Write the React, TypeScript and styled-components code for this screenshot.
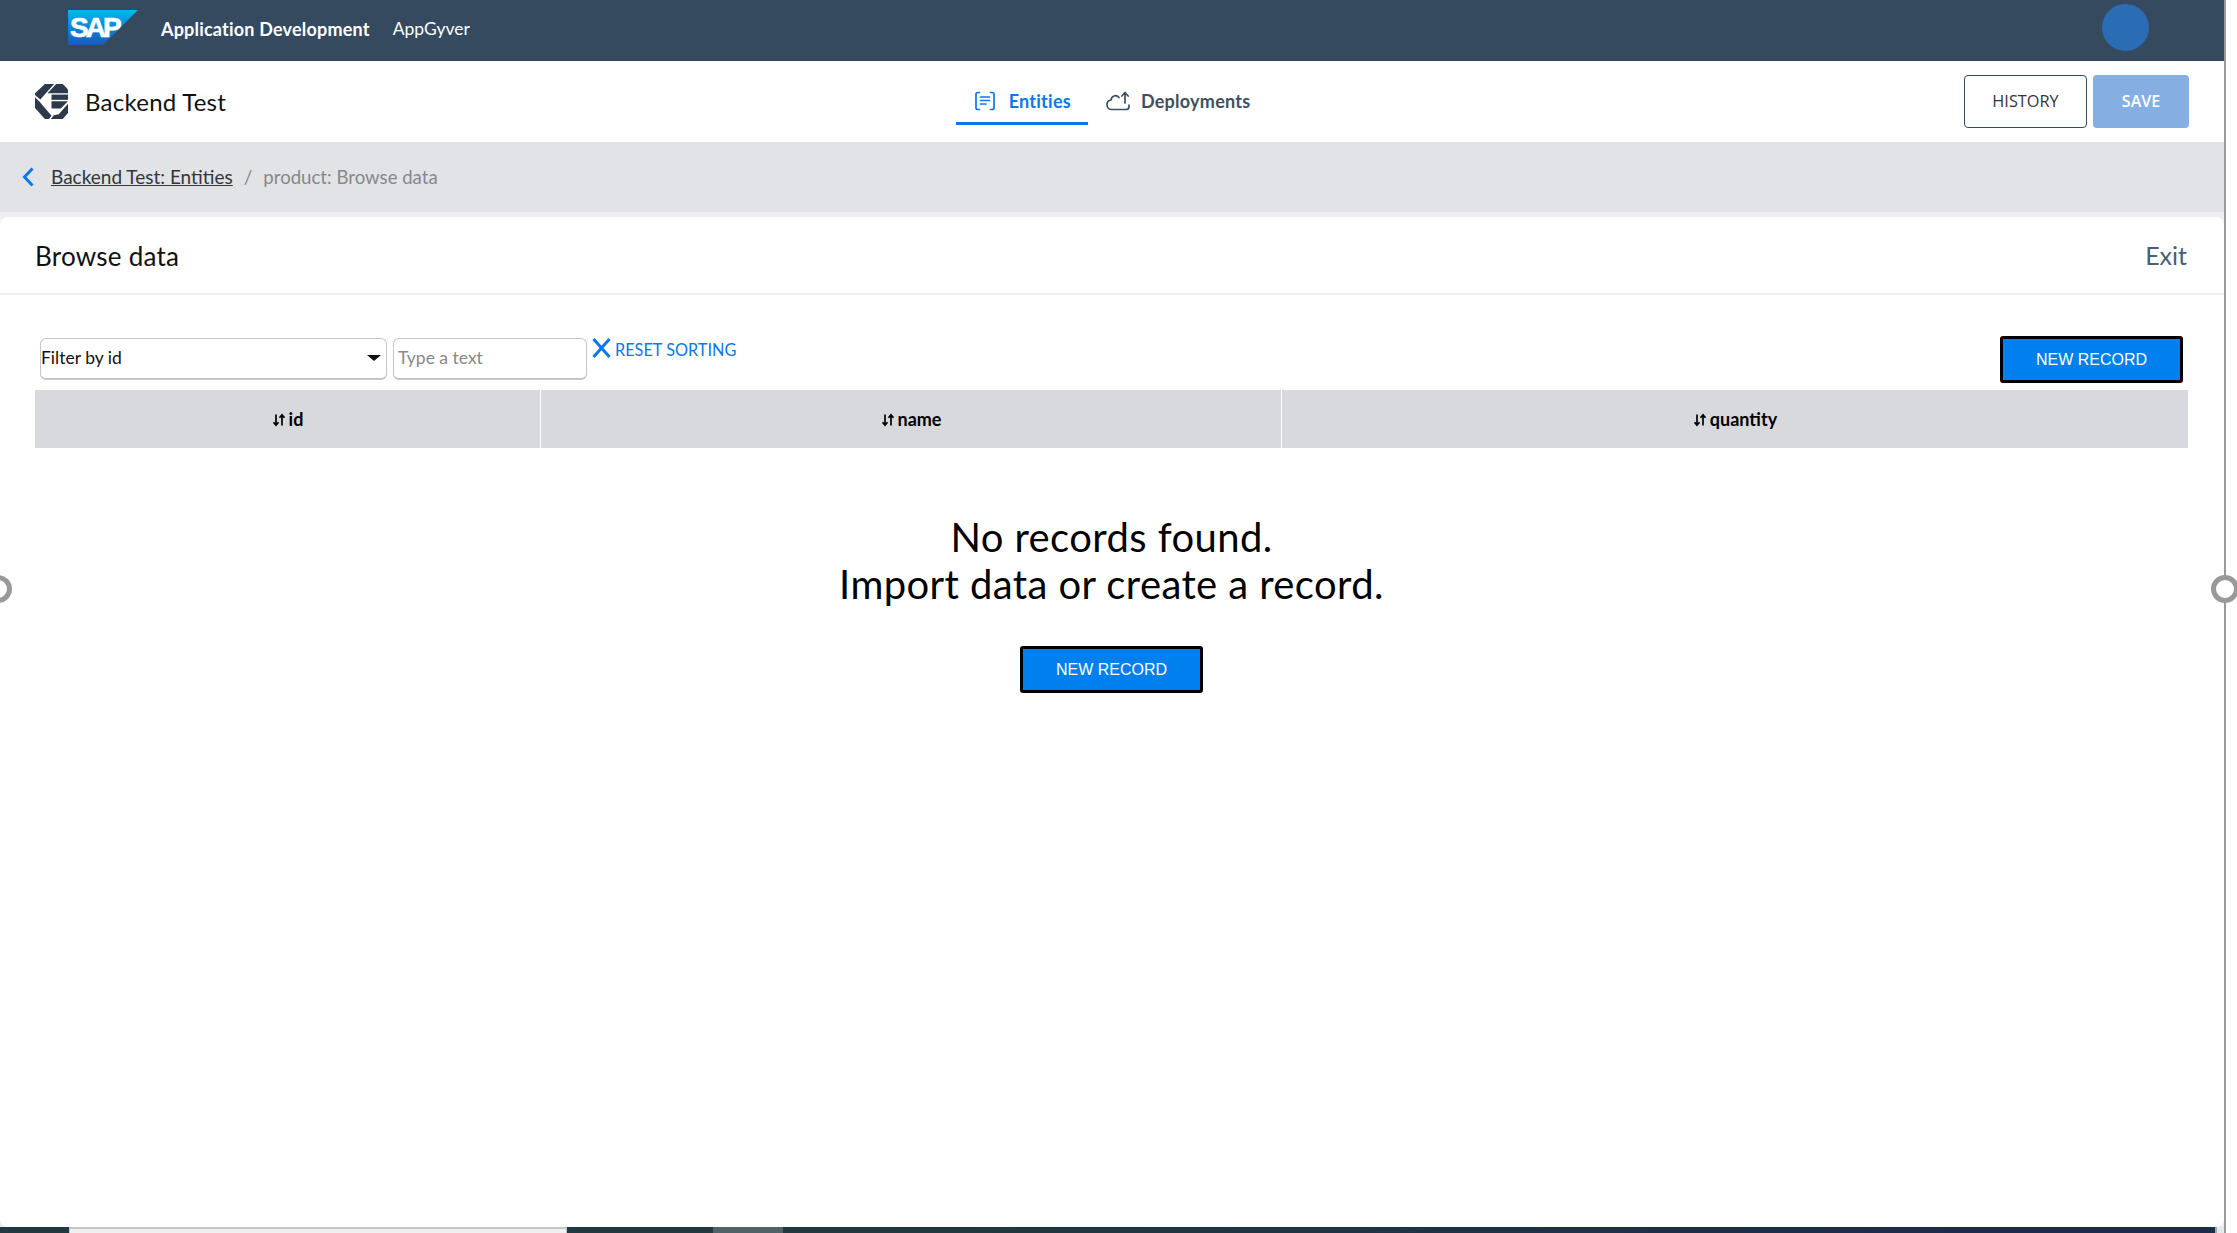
import React from "react";
import styled, { createGlobalStyle } from "styled-components";

const Global = createGlobalStyle`
  html, body { margin: 0; padding: 0; background: #fff; }
  body { font-family: "Lato", "Open Sans", sans-serif; overflow: hidden; }
  * { box-sizing: border-box; }
`;

const Frame = styled.div`
  position: relative;
  display: flex;
  width: 2237px;
  height: 1233px;
  overflow: hidden;
  background: #fff;
`;
const Main = styled.div`
  display: flex;
  flex-direction: column;
  width: 2224px;
  height: 100%;
  background: #eeeff2;
`;
const Rail = styled.div`
  width: 2px;
  height: 100%;
  background: #999;
`;
const TopBar = styled.header`
  display: flex;
  align-items: center;
  height: 61px;
  padding: 0 75px 0 68px;
  background: #354a5f;
  color: #fff;
`;
const SapLogo = styled.div`
  position: relative;
  width: 70px;
  height: 35px;
  margin-top: -7px;
  flex: none;
  svg { display: block; }
`;
const SapWord = styled.span`
  position: absolute;
  left: 2px;
  top: 4px;
  font: 700 28px/28px "Liberation Sans", sans-serif;
  letter-spacing: -3px;
  color: #fff;
  -webkit-text-stroke: 0.7px #fff;
`;
const Product = styled.span`
  margin-left: 23px;
  margin-top: -4px;
  font: 700 18px "Lato", sans-serif;
  letter-spacing: 0.2px;
`;
const Area = styled.span`
  margin-left: 23px;
  margin-top: -4px;
  font: 400 17.5px "Lato", sans-serif;
`;
const Avatar = styled.div`
  width: 47px;
  height: 47px;
  margin-left: auto;
  margin-top: -7px;
  border-radius: 50%;
  background: #2a6db5;
`;
const AppHeader = styled.div`
  display: flex;
  align-items: center;
  height: 81px;
  padding: 0 35px;
  background: #fff;
`;
const AppName = styled.span`
  margin-left: 17px;
  font-size: 24px;
  letter-spacing: 0.25px;
  color: #111;
`;
const Tabs = styled.nav`
  display: flex;
  align-items: stretch;
  height: 47px;
  margin: 0 auto;
  padding-left: 16px;
`;
const Tab = styled.div<{ $active?: boolean }>`
  display: flex;
  align-items: center;
  gap: ${(p) => (p.$active ? "14px" : "11px")};
  padding: 2px ${(p) => (p.$active ? "17px" : "0")} 0 ${(p) => (p.$active ? "19px" : "18px")};
  font-size: 18px;
  font-weight: 700;
  letter-spacing: 0.25px;
  color: ${(p) => (p.$active ? "#0a78ea" : "#3f4f60")};
  border-bottom: 3px solid ${(p) => (p.$active ? "#0a78ea" : "transparent")};
`;
const HeaderActions = styled.div`
  display: flex;
  gap: 6px;
`;
const HistoryButton = styled.button`
  width: 123px;
  height: 53px;
  padding-bottom: 2px;
  border: 1px solid #354a5f;
  border-radius: 4px;
  background: #fff;
  color: #32363a;
  font: 400 16.3px "Open Sans", sans-serif;
`;
const SaveButton = styled.button`
  width: 96px;
  height: 53px;
  padding-bottom: 2px;
  border: none;
  border-radius: 4px;
  background: #85afe3;
  color: #fff;
  font: 600 16px "Open Sans", sans-serif;
`;
const Breadcrumb = styled.div`
  display: flex;
  align-items: center;
  height: 70px;
  padding: 0 22px 1px;
  background: #e2e3e7;
  font-size: 19px;
`;
const Crumb = styled.a`
  margin-left: 17px;
  color: #32363a;
  text-decoration: underline;
`;
const Slash = styled.span`
  margin: 0 11px;
  color: #888;
`;
const Current = styled.span`
  font-size: 18.6px;
  color: #888;
`;
const Card = styled.section`
  flex: 1;
  display: flex;
  flex-direction: column;
  margin-top: 5px;
  background: #fff;
  border-radius: 8px;
  min-height: 0;
`;
const CardHead = styled.div`
  display: flex;
  align-items: center;
  justify-content: space-between;
  height: 78px;
  padding: 1px 37px 0 35px;
  border-bottom: 2px solid #eeeff3;
`;
const CardTitle = styled.h1`
  margin: 0;
  font-size: 26px;
  font-weight: 400;
  letter-spacing: 0.25px;
  color: #111;
`;
const ExitLink = styled.a`
  margin-top: -2px;
  font-size: 25px;
  color: #4a5f75;
`;
const CardBody = styled.div`
  flex: 1;
  padding: 41px 36px 0 35px;
`;
const Toolbar = styled.div`
  display: flex;
  align-items: flex-start;
  height: 54px;
  padding: 2px 5px 0 5px;
  gap: 6px;
`;
const SelectBox = styled.div`
  display: flex;
  align-items: center;
  justify-content: space-between;
  width: 347px;
  height: 42px;
  padding: 0 5px 2px 0;
  background: #fff;
  border: 1px solid #c4c5ca;
  border-bottom-width: 2px;
  border-radius: 6px;
  font-size: 17.5px;
  color: #111;
`;
const Caret = styled.span`
  width: 0;
  height: 0;
  border-left: 7px solid transparent;
  border-right: 7px solid transparent;
  border-top: 6px solid #111;
`;
const TextField = styled.input`
  width: 194px;
  height: 42px;
  padding: 0 4px 2px;
  border: 1px solid #c4c5ca;
  border-bottom-width: 2px;
  border-radius: 6px;
  outline: none;
  font: 400 17.5px "Lato", sans-serif;
  &::placeholder { color: #888; opacity: 1; }
`;
const ResetLink = styled.div`
  display: flex;
  align-items: flex-start;
  gap: 4px;
  margin-left: -1px;
  color: #0a78ea;
  font-size: 16.3px;
  line-height: 24px;
`;
const PrimaryButton = styled.button`
  width: 183px;
  height: 47px;
  padding: 0;
  border: 3px solid #000;
  border-radius: 3px;
  background: #007fee;
  color: #fff;
  font: 400 16px "Liberation Sans", sans-serif;
`;
const ToolbarEnd = styled.div`
  margin-left: auto;
  margin-top: -2px;
`;
const TableHead = styled.div`
  display: grid;
  grid-template-columns: 505px 740px 1fr;
  gap: 1px;
  height: 58px;
`;
const HeadCell = styled.div`
  display: flex;
  align-items: center;
  justify-content: center;
  gap: 3px;
  background: #d8d9dd;
  font-size: 18px;
  font-weight: 700;
  color: #000;
  svg { margin-top: 1px; }
`;
const Empty = styled.div`
  display: flex;
  flex-direction: column;
  align-items: center;
  padding-top: 66px;
`;
const EmptyText = styled.p`
  margin: 0 0 38px;
  font-size: 40px;
  line-height: 47px;
  text-align: center;
  letter-spacing: 0.4px;
  color: #000;
`;
const BottomStrip = styled.div`
  display: flex;
  height: 6px;
  background: linear-gradient(90deg, #21393f 0%, #21393f 40%, #1c2b4a 90%);
`;
const TabStub = styled.div`
  width: 498px;
  margin-left: 69px;
  background: #f0f0f0;
  border: 1px solid #c4c4c4;
  border-width: 2px 1px 0;
`;
const ScrollThumb = styled.div`
  width: 70px;
  margin-left: 146px;
  background: #4e6267;
`;
const StripEnd = styled.div`
  width: 9px;
  margin-left: auto;
  background: #e6e9ec;
  border-left: 2px solid #a0a8b0;
`;
const Handle = styled.div<{ $x: number }>`
  position: absolute;
  left: ${(p) => p.$x}px;
  top: 575px;
  width: 28px;
  height: 28px;
  border: 5px solid #999;
  border-radius: 50%;
  background: #fff;
`;

const SortIcon = () => (
  <svg width="14" height="14" viewBox="0 0 14 14" fill="none" stroke="#000" strokeWidth="1.7">
    <path d="M4 1.5V12M1.5 9.2 4 12.2l2.5-3" />
    <path d="M10 12.5V2M7.5 4.8 10 1.8l2.5 3" />
  </svg>
);

const Head = ({ label }: { label: string }) => (
  <HeadCell>
    <SortIcon />
    {label}
  </HeadCell>
);

export default function App() {
  return (
    <Frame>
      <Global />
      <Main>
        <TopBar>
          <SapLogo>
            <svg width="70" height="35" viewBox="0 0 70 35">
              <defs>
                <linearGradient id="sap" x1="0" y1="0" x2="0" y2="1">
                  <stop offset="0" stopColor="#00b8f1" />
                  <stop offset="0.4" stopColor="#0a8fdc" />
                  <stop offset="1" stopColor="#1c5cb5" />
                </linearGradient>
              </defs>
              <polygon points="0,0 70,0 35,35 0,35" fill="url(#sap)" />
            </svg>
            <SapWord>SAP</SapWord>
          </SapLogo>
          <Product>Application Development</Product>
          <Area>AppGyver</Area>
          <Avatar />
        </TopBar>
        <AppHeader>
          <svg width="33" height="35" viewBox="0 0 100 106" fill="#2d3a4b">
            <path d="M30 0H58L16 47 0 33V28Z" />
            <path d="M64 0H84L100 17V28H38Z" />
            <path d="M50 32H100V48H50Z" />
            <path d="M50 52H100L78 74H50Z" />
            <path d="M0 40 14 54 50 96 42 106H30L0 73Z" />
            <path d="M100 60V88L84 106H48L57 95 72 92Z" />
          </svg>
          <AppName>Backend Test</AppName>
          <Tabs>
            <Tab $active>
              <svg width="20" height="20" viewBox="0 0 20 20" fill="none" stroke="currentColor" strokeWidth="1.7" strokeLinecap="round">
                <path d="M4.5 1.5H2.8C1.8 1.5 1 2.3 1 3.3V16.7C1 17.7 1.8 18.5 2.8 18.5H4.5" />
                <path d="M15.5 1.5H17.2C18.2 1.5 19 2.3 19 3.3V16.7C19 17.7 18.2 18.5 17.2 18.5H15.5" />
                <path d="M5.5 6H14.5M5.5 9.5H14.5M5.5 13H11" />
              </svg>
              Entities
            </Tab>
            <Tab>
              <svg width="24" height="20" viewBox="0 0 24 20" fill="none" stroke="currentColor" strokeWidth="1.7" strokeLinecap="round" strokeLinejoin="round">
                <path d="M13 6.5C11.8 5 9.8 4.3 8 5C6.3 5.6 5.2 7.2 5.1 9C2.8 9.3 1 11.2 1 13.7C1 16.3 3 18.5 5.7 18.5H20C21.6 18.5 23 17.2 23 15.4V14" />
                <path d="M19 12V2M15.8 5 19 1.5 22.2 5" />
              </svg>
              Deployments
            </Tab>
          </Tabs>
          <HeaderActions>
            <HistoryButton>HISTORY</HistoryButton>
            <SaveButton>SAVE</SaveButton>
          </HeaderActions>
        </AppHeader>
        <Breadcrumb>
          <svg width="12" height="20" viewBox="0 0 12 20" fill="none" stroke="#0a78ea" strokeWidth="3">
            <path d="M10.5 1.5 2.5 10l8 8.5" />
          </svg>
          <Crumb>Backend Test: Entities</Crumb>
          <Slash>/</Slash>
          <Current>product: Browse data</Current>
        </Breadcrumb>
        <Card>
          <CardHead>
            <CardTitle>Browse data</CardTitle>
            <ExitLink>Exit</ExitLink>
          </CardHead>
          <CardBody>
            <Toolbar>
              <SelectBox>
                Filter by id
                <Caret />
              </SelectBox>
              <TextField placeholder="Type a text" />
              <ResetLink>
                <svg width="19" height="20" viewBox="0 0 19 20" fill="none" stroke="currentColor" strokeWidth="3">
                  <path d="M1.5 1 17.5 19M17.5 1 1.5 19" />
                </svg>
                RESET SORTING
              </ResetLink>
              <ToolbarEnd>
                <PrimaryButton>NEW RECORD</PrimaryButton>
              </ToolbarEnd>
            </Toolbar>
            <TableHead>
              <Head label="id" />
              <Head label="name" />
              <Head label="quantity" />
            </TableHead>
            <Empty>
              <EmptyText>
                No records found.
                <br />
                Import data or create a record.
              </EmptyText>
              <PrimaryButton>NEW RECORD</PrimaryButton>
            </Empty>
          </CardBody>
        </Card>
        <BottomStrip>
          <TabStub />
          <ScrollThumb />
          <StripEnd />
        </BottomStrip>
      </Main>
      <Rail />
      <Handle $x={-16} />
      <Handle $x={2211} />
    </Frame>
  );
}
